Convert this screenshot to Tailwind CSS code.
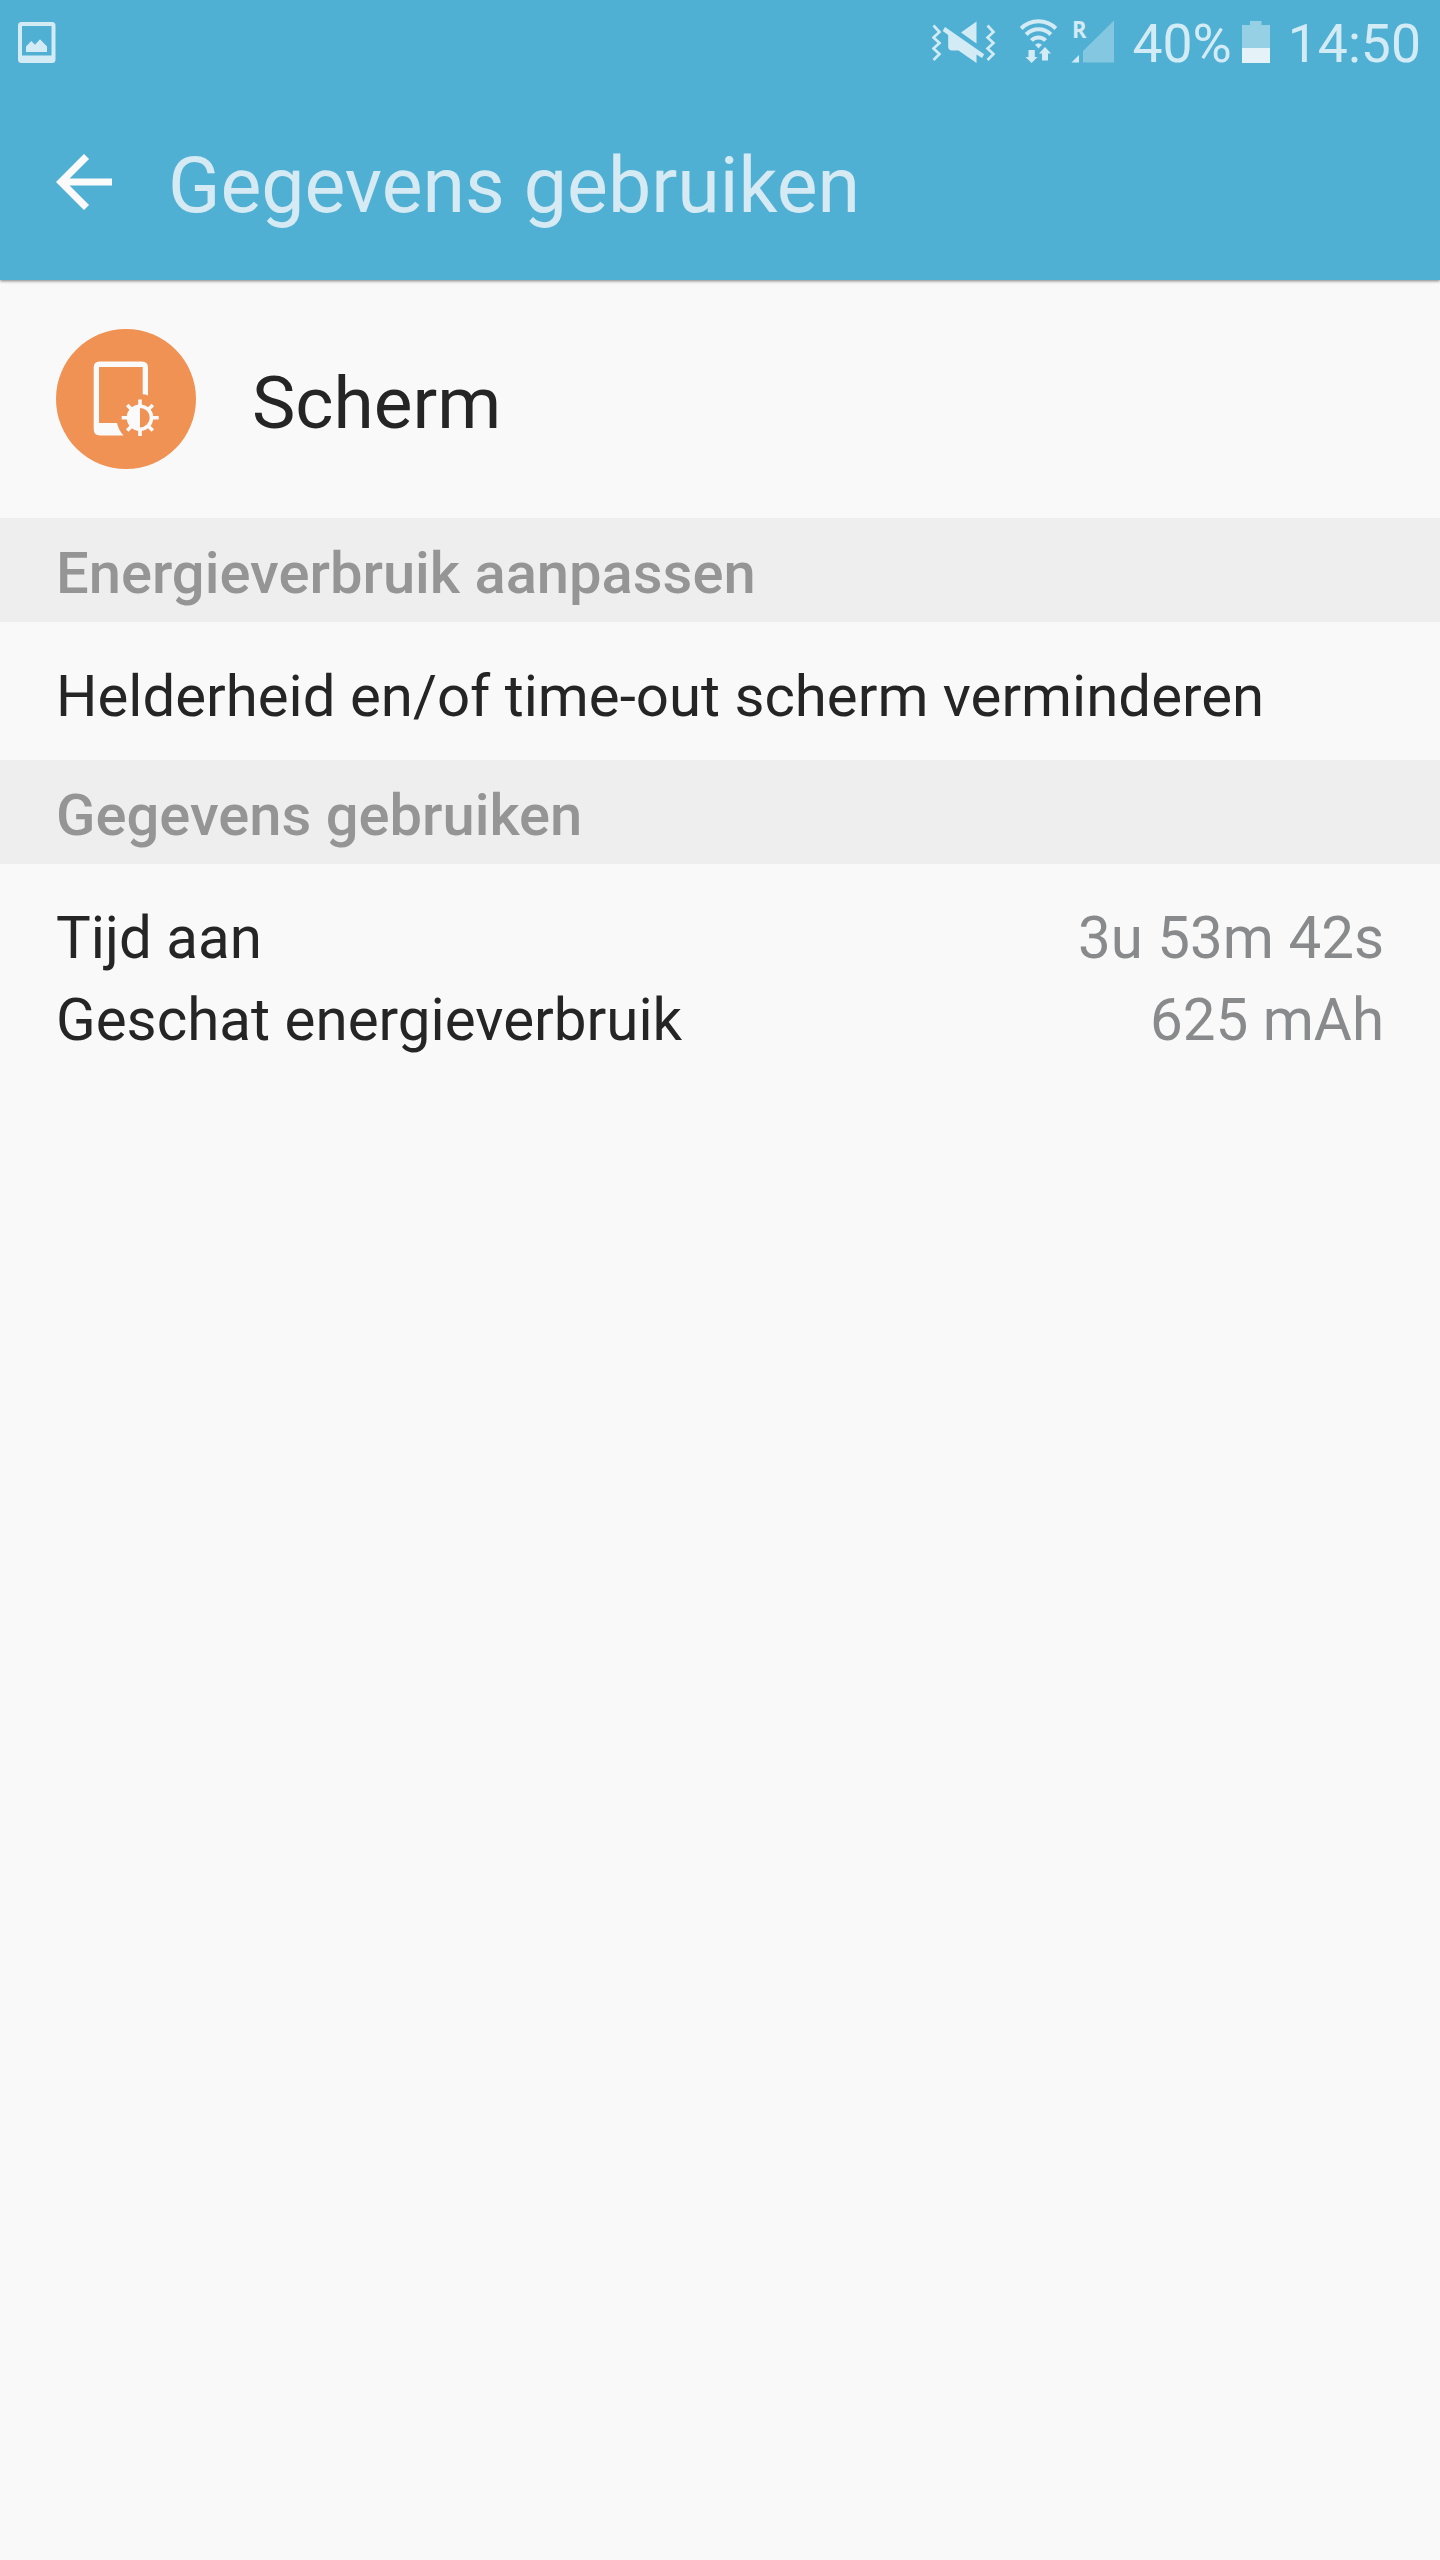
<!DOCTYPE html>
<html lang="nl">
<head>
    <meta charset="UTF-8">
    <meta name="viewport" content="width=device-width, initial-scale=1.0">
    <title>Gegevens gebruiken</title>
    <script src="https://cdn.jsdelivr.net/npm/@tailwindcss/browser@4"></script>
</head>
<body class="bg-[#f9f9f9] font-['Roboto',sans-serif] text-[#252525]">

    <div class="w-[1440px] min-h-[2560px]">
        <header class="relative bg-[#50b0d3] shadow-[0_1px_3px_rgba(0,0,0,0.5)]">
            <!-- Status bar -->
            <div class="flex items-center h-[84px] pl-[16px] pr-[19px] text-[#d3ebf4] text-[53.5px] leading-none whitespace-nowrap">
                <svg class="w-[42px] h-[84px] shrink-0" viewBox="16 0 42 84" fill="currentColor">
                    <path fill-rule="evenodd" d="M21.500 22H52a3.500 3.500 0 0 1 3.500 3.500V59.500a3.500 3.500 0 0 1-3.500 3.500H21.500a3.500 3.500 0 0 1-3.500-3.500V25.500A3.500 3.500 0 0 1 21.500 22zM22 26V55.500H51.500V26z"/>
                    <path d="M26 52V46.500L31.300 41L35 44.800L40 39.300L47 46.500V52z"/>
                </svg>

                <!-- Vibrate -->
                <svg class="w-[64px] h-[84px] shrink-0 ml-auto" viewBox="932 0 64 84" fill="currentColor">
                    <path d="M933.500 25.500L939.500 32L933.500 37.500L939.500 43L933.500 48.500L939.500 54L933.500 60M987.500 25.500L993.500 32L987.500 37.500L993.500 43L987.500 48.500L993.500 54L987.500 60" fill="none" stroke="currentColor" stroke-width="2.6"/>
                    <path d="M976.500 21.500V43.500L961 32.500z"/>
                    <path d="M945 27L984.200 54.300L982 58L976.500 54.500V63L958.500 50.500H952Q948.200 50.500 948.200 46.500V35L942.700 31z"/>
                </svg>

                <!-- Wifi -->
                <svg class="w-[40px] h-[84px] shrink-0 ml-[23px]" viewBox="1019 0 40 84" fill="currentColor">
                    <g fill="none" stroke="currentColor" stroke-width="4">
                        <path d="M1021.200 28.500A24.500 24.500 0 0 1 1055.800 28.500"/>
                        <path d="M1026.200 34.500A17 17 0 0 1 1050.800 34.500"/>
                        <path d="M1031.500 40.500A9.500 9.500 0 0 1 1045.500 40.500"/>
                    </g>
                    <path d="M1035 44.800Q1038.500 41.500 1042 44.800L1038.500 48.500z"/>
                    <path d="M1028.500 50H1034.800V57H1037.500L1031.600 63L1025.500 57H1028.500z"/>
                    <path d="M1042 60.500H1048V53.500H1051L1045 47L1039 53.500H1042z"/>
                </svg>

                <!-- Signal, roaming -->
                <svg class="w-[45px] h-[84px] shrink-0 ml-[11px]" viewBox="1070 0 45 84" fill="currentColor">
                    <text x="1072" y="37.500" class="font-['Open_Sans',sans-serif] font-bold text-[23.5px]" textLength="14.500" lengthAdjust="spacingAndGlyphs">R</text>
                    <path d="M1071.500 62.500L1079 55V62.500z"/>
                    <path d="M1083 51L1114 20.500V62.500H1083z" fill-opacity="0.4"/>
                </svg>

                <span class="ml-[17px] pt-[3px]">40%</span>

                <svg class="w-[28px] h-[84px] shrink-0 ml-[10px]" viewBox="1242 0 28 84">
                    <path d="M1250 21H1261.500V25H1270V48H1242V25H1250z" fill="#96d0e5"/>
                    <path d="M1242 48H1270V63H1242z" fill="#e5f2f8"/>
                </svg>

                <span class="ml-[18px] pt-[3px]">14:50</span>
            </div>

            <!-- Title bar -->
            <div class="flex items-center h-[196px] px-[56px]">
                <svg class="w-[56px] h-[56px] shrink-0" viewBox="0 0 56 56" fill="none" stroke="#fafafa" stroke-width="7.200">
                    <path d="M56 28H7M30.500 2.500L5 28L30.500 53.500"/>
                </svg>
                <h1 class="ml-[56px] pt-[9px] text-[77px] leading-none text-[#d5eaf3]">Gegevens gebruiken</h1>
            </div>
        </header>

        <!-- App -->
        <div class="flex items-center h-[238px] px-[56px]">
            <svg class="w-[140px] h-[140px] shrink-0" viewBox="0 0 140 140">
                <circle cx="70" cy="70" r="70" fill="#ef9253"/>
                <path fill="#fafafa" d="M43.500 32.500H86Q92 32.500 92 38.500V66.500Q89.500 65.200 86.700 65.200V38H43V94H61Q62.500 101 67.500 106.500H44Q37.700 106.500 37.700 100V38.500Q37.700 32.500 43.500 32.500z"/>
                <g stroke="#fafafa" stroke-width="3.600">
                    <path d="M84 70.500V77M84 101V107M65.700 88.700H72M96 88.700H102.700M71.200 75.900L76 80.700M92 96.700L96.800 101.500M96.800 75.900L92 80.700M76 96.700L71.200 101.500"/>
                    <circle cx="84" cy="88.700" r="11.500" fill="none"/>
                </g>
                <path fill="#fafafa" d="M84 76V101.400A12.700 12.700 0 0 1 84 76z"/>
            </svg>
            <span class="ml-[56px] pt-2 text-[73px] leading-none">Scherm</span>
        </div>

        <h2 class="flex items-center h-[104px] px-[56px] pt-2 bg-[#eeeeee] text-[57.9px] leading-none font-medium text-[#959595]">Energieverbruik aanpassen</h2>
        <div class="flex items-center h-[138px] px-[56px] pt-2.5 text-[58.15px] leading-none">Helderheid en/of time-out scherm verminderen</div>

        <h2 class="flex items-center h-[104px] px-[56px] pt-2 bg-[#eeeeee] text-[57.9px] leading-none font-medium text-[#959595]">Gegevens gebruiken</h2>
        <div class="px-[56px] pt-[33px] text-[58.3px] leading-[82px]">
            <div class="flex justify-between">
                <span>Tijd aan</span>
                <span class="text-[#898a8b]">3u 53m 42s</span>
            </div>
            <div class="flex justify-between">
                <span>Geschat energieverbruik</span>
                <span class="text-[#898a8b]">625 mAh</span>
            </div>
        </div>
    </div>

</body>
</html>
